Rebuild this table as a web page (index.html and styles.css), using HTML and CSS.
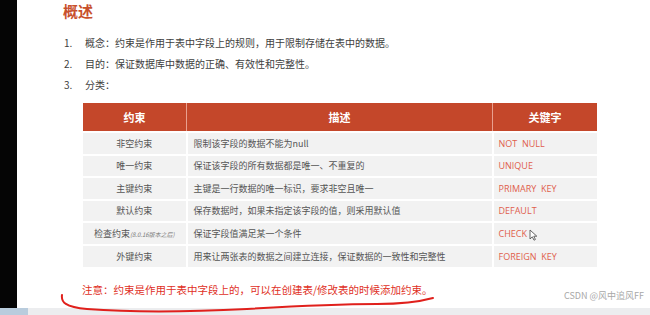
FILE: index.html
```html
<html>
  <head>
    <title>概述</title>
    <link rel="stylesheet" href="styles.css">
  </head>
  <body>
    <div class="screen">
      <div class="side-bar"></div>
      <div class="slide">
        <h1 class="slide-title">概述</h1>
        <ol class="points">
          <li><span class="num">1.</span>概念：约束是作用于表中字段上的规则，用于限制存储在表中的数据。</li>
          <li><span class="num">2.</span>目的：保证数据库中数据的正确、有效性和完整性。</li>
          <li><span class="num">3.</span>分类：</li>
        </ol>
        <table class="rules">
          <tr><th class="c_name">约束</th><th class="c_desc">描述</th><th class="c_key">关键字</th></tr>
          <tr><td class="c_name">非空约束</td><td class="c_desc">限制该字段的数据不能为null</td><td class="c_key">NOT&nbsp; NULL</td></tr>
          <tr><td class="c_name">唯一约束</td><td class="c_desc">保证该字段的所有数据都是唯一、不重复的</td><td class="c_key">UNIQUE</td></tr>
          <tr><td class="c_name">主键约束</td><td class="c_desc">主键是一行数据的唯一标识，要求非空且唯一</td><td class="c_key">PRIMARY&nbsp; KEY</td></tr>
          <tr><td class="c_name">默认约束</td><td class="c_desc">保存数据时，如果未指定该字段的值，则采用默认值</td><td class="c_key">DEFAULT</td></tr>
          <tr><td class="c_name">检查约束<span class="ver">(8.0.16版本之后)</span></td><td class="c_desc">保证字段值满足某一个条件</td><td class="c_key">CHECK<span class="cursor"><svg width="9" height="12" viewBox="0 0 9 12"><path d="M1 1 L1 10 L3.3 7.8 L5 11.2 L6.4 10.5 L4.8 7.2 L7.8 7.2 Z" fill="#fff" stroke="#555" stroke-width="0.9" stroke-linejoin="round"/></svg></span></td></tr>
          <tr><td class="c_name">外键约束</td><td class="c_desc">用来让两张表的数据之间建立连接，保证数据的一致性和完整性</td><td class="c_key">FOREIGN&nbsp; KEY</td></tr>
        </table>
        <div class="note">注意：约束是作用于表中字段上的，可以在创建表/修改表的时候添加约束。</div>
        <svg class="scribble" width="440" height="30" viewBox="0 0 440 30"><path d="M45 4 C44 11, 48 16, 70 18 C110 21, 170 21, 230 18 C280 15, 320 13, 360 13 C385 13, 405 10, 416 7" fill="none" stroke="#e0201c" stroke-width="2" stroke-linecap="round"/></svg>
      </div>
    </div>
    <div class="task-strip">
      <span class="tab blue"></span>
      <span class="watermark">CSDN @风中追风FF</span>
    </div>
  </body>
</html>
```
FILE: styles.css
```css
body {
  margin: 0px;
  padding: 0px;
  width: 650px;
  height: 315px;
  overflow: hidden;
  background-color: #FFF;
  font-family: "Noto Sans CJK SC", "Noto Sans", sans-serif;
  position: relative;
}
.screen {
  display: flex;
  height: 308px;
}
.side-bar {
  width: 17px;
  background-color: #050505;
  flex-shrink: 0;
}
.slide {
  flex: 1;
  padding-left: 46px;
  position: relative;
}
.slide-title {
  margin: 0px;
  padding-top: 1px;
  font-size: 15px;
  line-height: 19px;
  font-weight: bold;
  color: #C8502C;
}
.points {
  list-style: none;
  margin: 0px;
  padding: 0px;
  padding-top: 14px;
  font-size: 10px;
  color: #404040;
}
.points li {
  height: 21px;
  line-height: 18px;
}
.points li:last-child {
  height: 20px;
}
.num {
  display: inline-block;
  width: 21px;
  padding-left: 1px;
}
.rules {
  margin-left: 20px;
  margin-top: 7px;
  border-collapse: collapse;
  table-layout: fixed;
  width: 514px;
}
.rules th {
  background-color: #C4472A;
  color: #FFF;
  font-size: 11px;
  font-weight: bold;
  height: 29px;
  padding: 0px;
  border-right: 1px solid #E9A08F;
}
.rules th:last-child {
  border-right: none;
}
.rules td {
  background-color: #F2F2F2;
  height: 22.5px;
  padding: 0px;
  font-size: 9px;
  color: #555;
  border-top: 2px solid #FFF;
  border-right: 2px solid #FFF;
}
.rules td:last-child {
  border-right: none;
}
.rules .c_name {
  width: 103px;
  text-align: center;
}
.rules .c_desc {
  width: 305px;
}
.rules td.c_desc {
  padding-left: 6px;
}
.rules th.c_desc {
  text-align: center;
  padding-left: 0px;
}
.rules td.c_key {
  padding-left: 5px;
  color: #E0604C;
  font-family: "Open Sans", "Noto Sans", sans-serif;
  font-size: 9px;
  position: relative;
}
.ver {
  font-size: 6px;
  font-style: italic;
  color: #777;
}
.cursor {
  position: absolute;
  left: 35px;
  top: 6px;
}
.note {
  margin-top: 15px;
  padding-left: 19px;
  font-size: 10.5px;
  line-height: 16px;
  color: #E0301E;
}
.scribble {
  position: absolute;
  left: 0px;
  top: 291px;
  z-index: 2;
}
.task-strip {
  height: 7px;
  background-color: #ECEDEF;
  display: flex;
  position: relative;
}
.tab.blue {
  width: 28px;
  background-color: #B9CCDD;
}
.watermark {
  position: absolute;
  right: 6px;
  top: -19px;
  font-family: "Noto Sans CJK SC", sans-serif;
  font-size: 9px;
  color: #A8A8A8;
}
```
